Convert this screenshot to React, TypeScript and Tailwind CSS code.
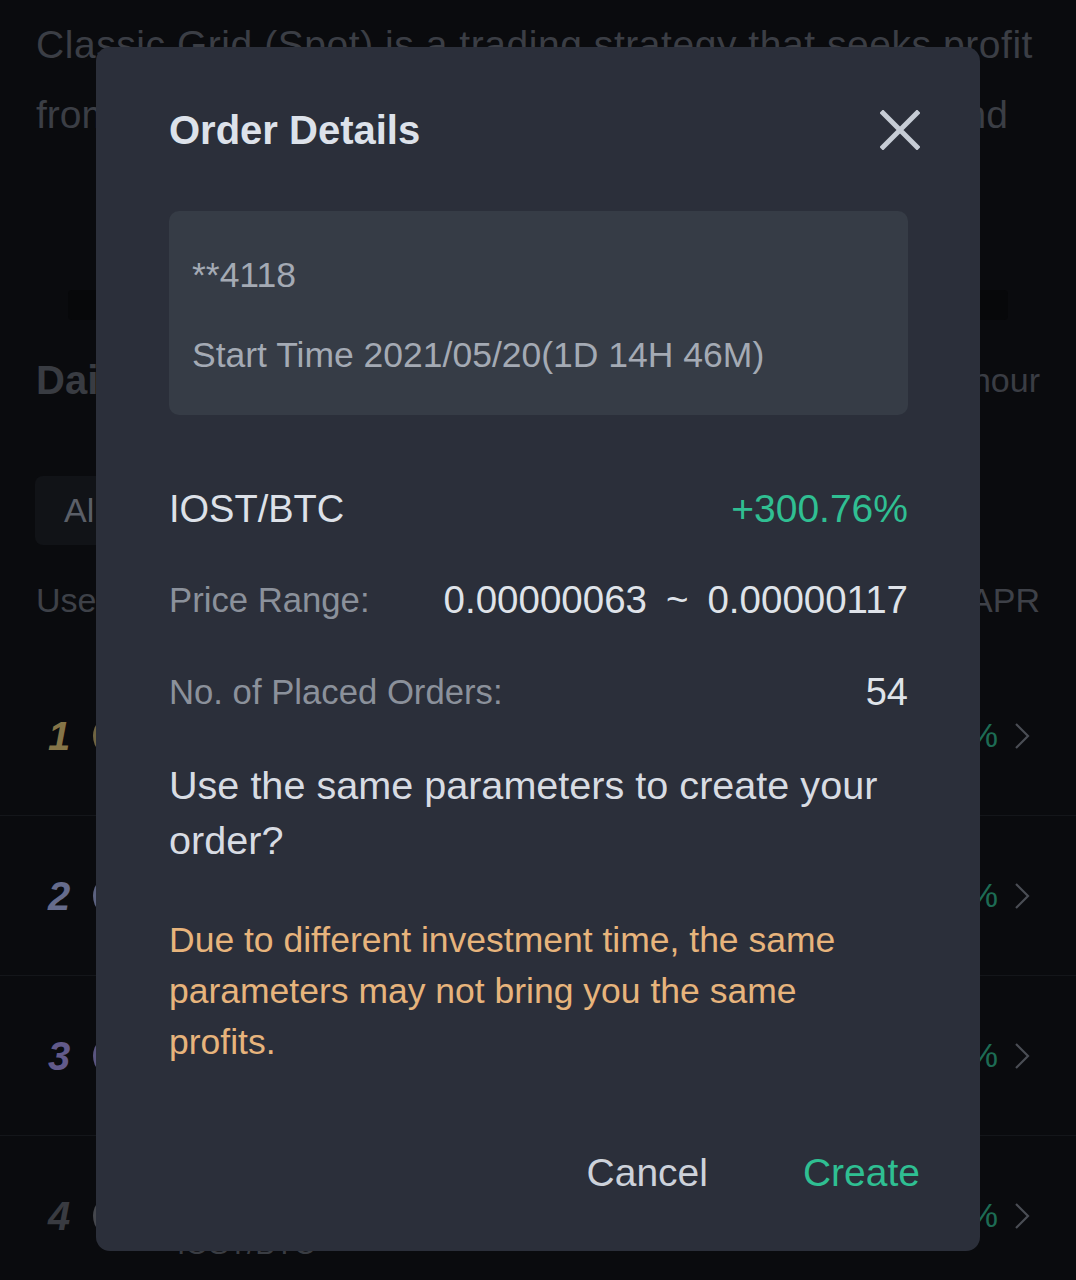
import React from 'react';

const rows = [
  { rank: '1', rankColor: 'text-[#857548]', coin: 'bg-[#6f6442]' },
  { rank: '2', rankColor: 'text-[#666c8c]', coin: 'bg-[#5c6280]' },
  { rank: '3', rankColor: 'text-[#625a8a]', coin: 'bg-[#5a5580]' },
  { rank: '4', rankColor: 'text-[#393b41]', coin: 'bg-[#45474d]' },
];

const CloseIcon = () => (
  <svg width="40" height="40" viewBox="0 0 40 40" fill="none">
    <path d="M3 3 L37 37 M37 3 L3 37" stroke="#c6ccd5" strokeWidth="5" strokeLinecap="square" />
  </svg>
);

const Chevron = () => (
  <svg width="16" height="28" viewBox="0 0 16 28" fill="none">
    <path d="M2 2 L14 14 L2 26" stroke="#4a4d54" strokeWidth="2.2" />
  </svg>
);

// dimmed page sitting behind the dialog
const BackgroundPage = () => (
  <div className="flex flex-col pt-[10px]">
    <div className="px-[36px] text-[39px] leading-[70px] text-[#3b3e45] whitespace-nowrap overflow-hidden">
      <p className="tracking-[0.55px]">Classic Grid (Spot) is a trading strategy that seeks profit</p>
      <p className="flex justify-between pr-[32px]">
        <span>from market volatility by buying low</span>
        <span>and</span>
      </p>
    </div>

    <div className="mt-[140px] mx-[68px] h-[30px] bg-[#07080a] rounded-[4px]" />

    <div className="mt-[36px] px-[36px] flex items-center justify-between h-[48px]">
      <span className="text-[40px] font-bold text-[#393c42]">Daily Top Bots</span>
      <span className="text-[34px] text-[#3a3d44]">Updated every hour</span>
    </div>

    <div className="mt-[72px] px-[35px] flex gap-[16px]">
      <div className="h-[69px] px-[29px] flex items-center rounded-[8px] bg-[#111317] text-[34px] text-[#5b5f67]">
        All
      </div>
    </div>

    <div className="mt-[37px] px-[36px] flex items-center justify-between h-[36px] text-[34px] text-[#3e4148]">
      <span>User</span>
      <span>APR</span>
    </div>

    <div className="mt-[38px] flex flex-col">
      {rows.map((r) => (
        <div key={r.rank} className="h-[160px] flex items-center border-b border-[#14161a] pl-[48px] pr-[46px]">
          <span className={`w-[45px] text-[40px] font-bold italic ${r.rankColor}`}>{r.rank}</span>
          <div className={`w-[44px] h-[44px] rounded-full ${r.coin}`} />
          <div className="ml-[40px] flex flex-col gap-[6px] pt-[56px]">
            <span className="text-[30px] text-[#3a3d43]">IOST/BTC</span>
          </div>
          <span className="ml-auto text-[34px] text-[#1d6b54]">300.76%</span>
          <span className="ml-[16px]">
            <Chevron />
          </span>
        </div>
      ))}
    </div>
  </div>
);

export default function App() {
  return (
    <div className="relative w-full h-[1280px] overflow-hidden bg-[#0a0b0e] font-['Liberation_Sans',Arial,sans-serif]">
      <BackgroundPage />

      {/* dialog */}
      <div className="absolute left-[96px] top-[47px] w-[884px] h-[1204px] rounded-[14px] bg-[#2b2f3a] pl-[73px] pr-[72px] pt-[59px] flex flex-col">
        <div className="h-[48px] flex items-center justify-between">
          <h2 className="text-[40px] font-bold text-[#dde2ea]">Order Details</h2>
          <button className="-mr-[12px]">
            <CloseIcon />
          </button>
        </div>

        <div className="mt-[57px] h-[204px] rounded-[10px] bg-[#363c46] px-[23px] pt-[44px] flex flex-col gap-[40px] text-[35.5px] leading-[40px] text-[#a4aab4]">
          <p>**4118</p>
          <p>Start Time 2021/05/20(1D 14H 46M)</p>
        </div>

        <div className="mt-[70px] h-[48px] flex items-center justify-between text-[38px]">
          <span className="text-[#dde1e8]">IOST/BTC</span>
          <span className="text-[39px] text-[#30bf92]">+300.76%</span>
        </div>

        <div className="mt-[43px] h-[48px] flex items-center justify-between">
          <span className="text-[34.7px] text-[#8b919b]">Price Range:</span>
          <span className="flex items-center gap-[19px] text-[38.5px] text-[#dfe3e9]">
            <span>0.00000063</span>
            <span>~</span>
            <span>0.00000117</span>
          </span>
        </div>

        <div className="mt-[44px] h-[48px] flex items-center justify-between">
          <span className="text-[34.7px] text-[#8b919b]">No. of Placed Orders:</span>
          <span className="text-[38px] text-[#dfe3e9]">54</span>
        </div>

        <p className="mt-[42px] text-[39.6px] leading-[55px] text-[#d8dce3]">
          Use the same parameters to create your order?
        </p>

        <p className="mt-[47px] text-[35.5px] leading-[51px] text-[#e7b47c]">
          Due to different investment time, the same parameters may not bring you the same profits.
        </p>

        <div className="mt-[81px] -mr-[12px] h-[48px] flex items-center justify-end gap-[95px] text-[39px]">
          <button className="text-[#cdd2da]">Cancel</button>
          <button className="text-[#2fbf92]">Create</button>
        </div>
      </div>
    </div>
  );
}
